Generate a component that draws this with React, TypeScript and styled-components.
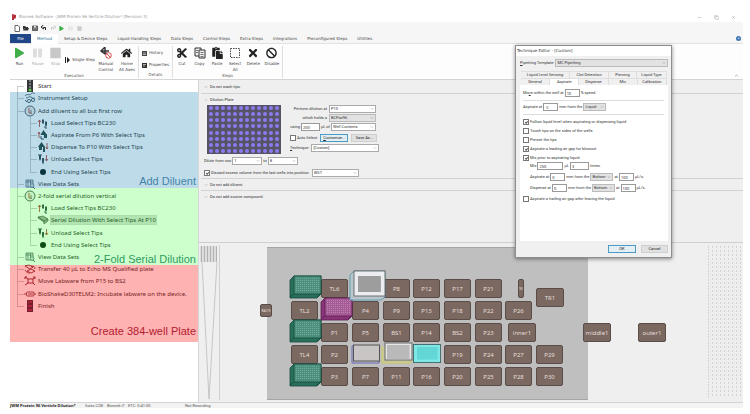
import React from "react";
import styled, { createGlobalStyle, css } from "styled-components";
import { FaPlay, FaPause, FaStop, FaCut, FaHome, FaTimes, FaBan, FaPaste } from "react-icons/fa";
import { ChevronDown, ChevronUp, Minus, Copy, X } from "lucide-react";

const Global = createGlobalStyle`
  *, *::before, *::after { box-sizing: border-box; }
  body { margin: 0; background: #fff; }
  button, input, select { font: inherit; color: inherit; margin: 0; }
  button { padding: 0; border: 0; background: none; }
`;

const chromeFont = `4px/6px "DejaVu Sans", "Open Sans", sans-serif`;

const Page = styled.div`
  min-height: 100vh;
  padding: 12px 7px 6px 10px;
  display: flex;
  flex-direction: column;
  position: relative;
  overflow: hidden;
  font: 4px/6px Roboto, "Noto Sans", sans-serif;
  color: #444;
`;

/* ---------- window chrome ---------- */

const TitleBar = styled.header`
  height: 10px;
  display: flex;
  align-items: center;
  gap: 3px;
  padding: 0 7px 0 2px;
  color: #999;
  font: ${chromeFont};
`;
const TitleText = styled.h1`
  flex: 1;
  margin: 0;
  font-size: inherit;
  font-weight: 400;
`;
const WindowButtons = styled.div`
  display: flex;
  gap: 12px;
  button { display: flex; }
`;
const QuickBar = styled.div`
  height: 12px;
  background: #f6f6f6;
  display: flex;
  align-items: center;
  gap: 3px;
  padding-left: 4px;
  button { display: flex; min-width: 6px; }
`;
const TabBar = styled.nav`
  height: 10px;
  background: #f6f6f6;
  display: flex;
  align-items: stretch;
  border-bottom: 1px solid #e2e2e2;
  padding-right: 2px;
  font: ${chromeFont};
`;
const RibbonTab = styled.button<{ $kind?: "file" | "active" }>`
  padding: 0 5px;
  white-space: nowrap;
  ${(p) => p.$kind === "file" && css`background: #1f4788; color: #fff; width: 21px;`}
  ${(p) => p.$kind === "active" && css`background: #fff; color: #2b7394; width: 27px; margin-right: 1px; height: 10px;`}
`;
const HelpButton = styled.button`
  margin-left: auto;
  display: flex;
  align-items: center;
`;
const Ribbon = styled.div`
  height: 36px;
  display: flex;
  background: #fdfdfd;
  border-bottom: 1px solid #d4d4d4;
  padding: 2px 0 1px;
  font: ${chromeFont};
`;
const RibbonGroup = styled.section<{ $w: number }>`
  width: ${(p) => p.$w}px;
  border-right: 1px solid #dedede;
  display: flex;
  flex-direction: column;
`;
const GroupTools = styled.div`
  flex: 1;
  display: flex;
  justify-content: space-evenly;
`;
const GroupName = styled.div`
  text-align: center;
  height: 6px;
  color: #555;
`;
const Tool = styled.button<{ $dim?: boolean; $w?: number }>`
  width: ${(p) => p.$w ?? 17}px;
  display: flex;
  flex-direction: column;
  align-items: center;
  line-height: 6px;
  white-space: nowrap;
  color: ${(p) => (p.$dim ? "#aaa" : "#444")};
  svg { height: 12px; margin: 1px 0 2px; }
`;
const SmallTools = styled.div`
  display: flex;
  flex-direction: column;
  justify-content: center;
  gap: 6px;
`;
const SmallTool = styled.button`
  display: flex;
  align-items: center;
  gap: 2px;
  white-space: nowrap;
`;
const RibbonEnd = styled.button`
  margin: auto 4px 0 auto;
  display: flex;
`;

/* ---------- body ---------- */

const Body = styled.main`
  flex: 1;
  display: flex;
  background: #efefef;
`;
const Sidebar = styled.aside`
  width: 189px;
  position: relative;
  background: #fff;
  border-right: 1px solid #d6d6d6;
  font: 6px/8px "Noto Sans", sans-serif;
  color: #333;
`;
const StepList = styled.ul`
  list-style: none;
  margin: 0;
  padding: 0 0 0 6px;
  height: 232px;
  display: grid;
  grid-auto-rows: 1fr;
`;
const StepRow = styled.li`
  display: flex;
  align-items: center;
  min-height: 0;
`;
type Span = "full" | "lower" | "upper" | "line";
const Guide = styled.span<{ $span: Span; $indent?: boolean }>`
  align-self: stretch;
  width: 8px;
  margin-right: ${(p) => (p.$indent ? 5 : 0)}px;
  position: relative;
  &::before {
    content: "";
    position: absolute;
    left: 1px;
    top: ${(p) => (p.$span === "lower" ? "50%" : "0")};
    bottom: ${(p) => (p.$span === "upper" ? "50%" : "0")};
    border-left: 1px solid #ccc;
  }
  &::after {
    content: "";
    position: absolute;
    left: 1px;
    right: 0;
    top: 50%;
    border-top: ${(p) => (p.$span === "line" ? "0" : "1px")} solid #ccc;
  }
`;
const StepIcon = styled.span`
  width: 12px;
  height: 12px;
  margin-right: 2px;
  svg { display: block; }
`;
const StepName = styled.span<{ $selected?: boolean }>`
  white-space: nowrap;
  ${(p) => p.$selected && css`background: #dedede; outline: 1px solid #d6d6d6;`}
`;
const Band = styled.div<{ $top: number; $h: number; $tint: string; $ink: string; $lift?: number }>`
  position: absolute;
  left: 0;
  right: 0;
  top: ${(p) => p.$top}px;
  height: ${(p) => p.$h}px;
  background: ${(p) => p.$tint};
  color: ${(p) => p.$ink};
  display: flex;
  align-items: flex-end;
  justify-content: flex-end;
  padding: 0 2px ${(p) => p.$lift ?? 0}px 0;
  font: 11px/12px "Liberation Sans", sans-serif;
`;

const Work = styled.div`
  flex: 1;
  min-width: 0;
  display: flex;
  flex-direction: column;
`;
const Config = styled.div`
  height: 163px;
  border-bottom: 1px solid #cfcfcf;
  padding-left: 2px;
`;
const Fold = styled.section<{ $open?: boolean }>`
  border-top: 1px solid #d2d2d2;
  padding-left: 3px;
  height: ${(p) => (p.$open ? "auto" : "12px")};
  &:first-child { border-top-color: #efefef; height: 13px; }
`;
const FoldHead = styled.h2`
  margin: 0;
  padding-top: 2px;
  display: flex;
  align-items: center;
  gap: 2px;
  font-size: 4px;
  font-weight: 400;
  line-height: 8px;
  color: #333;
`;
const Dilution = styled.div`
  display: flex;
  gap: 8px;
  padding: 1px 0 0 3px;
`;
const Plate = styled.div`
  width: 74px;
  height: 49px;
  background: #565366;
  display: grid;
  grid-template-columns: repeat(12, 1fr);
  grid-template-rows: repeat(8, 1fr);
  place-items: center;
  padding: 0 1px;
`;
const Well = styled.i`
  width: 4px;
  height: 4px;
  border-radius: 50%;
  background: #8a7cf0;
`;
const FormCol = styled.div`
  width: 90px;
  display: flex;
  flex-direction: column;
  gap: 1px;
`;
const Line = styled.div<{ $gap?: number; $end?: boolean; $pad?: number; $top?: number; $h?: number }>`
  display: flex;
  align-items: center;
  height: ${(p) => p.$h ?? 8}px;
  gap: ${(p) => p.$gap ?? 2}px;
  justify-content: ${(p) => (p.$end ? "flex-end" : "flex-start")};
  padding: 0 ${(p) => (p.$end ? 3 : 0)}px 0 ${(p) => p.$pad ?? 0}px;
  margin-top: ${(p) => p.$top ?? 0}px;
  white-space: nowrap;
  color: #333;
`;
const Field = styled.input<{ $w: number }>`
  width: ${(p) => p.$w}px;
  height: 8px;
  border: 1px solid #999;
  background: #fff;
  padding: 0 1px;
  line-height: 6px;
  border-radius: 0;
`;
const SelectWrap = styled.span<{ $w?: number; $gray?: boolean }>`
  display: grid;
  grid-template-columns: minmax(0, 1fr);
  align-items: center;
  ${(p) => (p.$w ? css`width: ${p.$w}px;` : css`flex: 1;`)}
  height: 8px;
  border: 1px solid ${(p) => (p.$gray ? "#bbb" : "#aaa")};
  background: ${(p) => (p.$gray ? "#e2e2e2" : "#fff")};
  select {
    grid-area: 1 / 1;
    appearance: none;
    border: 0;
    background: none;
    padding: 0 1px;
    height: 6px;
    line-height: 6px;
  }
  svg { grid-area: 1 / 1; justify-self: end; margin-right: 1px; pointer-events: none; }
`;
const Check = styled.label`
  display: flex;
  align-items: center;
  gap: 1px;
  white-space: nowrap;
`;
const CheckInput = styled.input.attrs({ type: "checkbox" })`
  appearance: none;
  width: 6px;
  height: 6px;
  border: 1px solid #777;
  background: #fff;
  display: grid;
  place-items: center;
  &:checked::after {
    content: "";
    width: 3px;
    height: 2px;
    border: solid #555;
    border-width: 0 0 1px 1px;
    transform: rotate(-45deg);
  }
`;
const Push = styled.button<{ $w: number; $focus?: boolean }>`
  width: ${(p) => p.$w}px;
  height: 8px;
  line-height: 6px;
  background: ${(p) => (p.$focus ? "#e3eef5" : "#e1e1e1")};
  border: 1px solid ${(p) => (p.$focus ? "#4a9cc4" : "#cfcfcf")};
  color: #222;
`;

/* ---------- deck ---------- */

const DeckPane = styled.div`
  flex: 1;
  display: flex;
  justify-content: space-between;
  position: relative;
`;
const Surface = styled.div`
  position: absolute;
  left: 68px;
  top: 4px;
  width: 321px;
  height: 153px;
  background: #bfbfbf;
  border: solid #a5a5a5;
  border-width: 1px 0;
`;
const Slot = styled.div<{ $x: number; $y: number; $w?: number; $h?: number; $small?: boolean }>`
  position: absolute;
  left: ${(p) => p.$x}px;
  top: ${(p) => p.$y}px;
  width: ${(p) => p.$w ?? 28}px;
  height: ${(p) => p.$h ?? 19}px;
  background: #7b6860;
  border: 1px solid #5a4d49;
  border-radius: 2px;
  color: #e4dedb;
  display: flex;
  align-items: center;
  justify-content: center;
  overflow: hidden;
  font: ${(p) => (p.$small ? 3 : 6)}px/8px "Noto Sans", sans-serif;
`;
const Labware = styled.svg<{ $x: number; $y: number }>`
  position: absolute;
  left: ${(p) => p.$x}px;
  top: ${(p) => p.$y}px;
  overflow: visible;
`;

/* ---------- dialog ---------- */

const Dialog = styled.div`
  position: absolute;
  top: 45px;
  right: 78px;
  width: 157px;
  background: #f0f0f0;
  border: 1px solid #8d8d8d;
  box-shadow: 0 1px 4px rgba(0, 0, 0, 0.45);
  color: #333;
`;
const DialogTitle = styled.h2`
  margin: 0;
  height: 10px;
  background: #fff;
  padding: 2px 0 0 1px;
  font: ${chromeFont};
`;
const DialogBody = styled.div`
  padding: 2px 3px 4px 4px;
`;
const TabLine = styled.div<{ $cols: string; $top?: number }>`
  display: grid;
  grid-template-columns: ${(p) => p.$cols};
  height: 7px;
  margin: ${(p) => p.$top ?? 0}px 1px 0;
`;
const DialogTab = styled.button<{ $on?: boolean }>`
  border: 1px solid #dedede;
  border-bottom: 0;
  border-left: 0;
  background: ${(p) => (p.$on ? "#fff" : "#f0f0f0")};
  line-height: 6px;
  white-space: nowrap;
`;
const TabPanel = styled.div`
  background: #fff;
  padding: 4px 4px 0 3px;
  height: 156px;
  display: flex;
  flex-direction: column;
`;
const Rule = styled.hr`
  width: 100%;
  margin: 3px 0 2px;
  border: 0;
  border-top: 1px solid #dcdcdc;
`;
const Buttons = styled.div`
  display: flex;
  justify-content: flex-end;
  gap: 5px;
  padding-top: 4px;
`;

const StatusBar = styled.footer`
  height: 6px;
  background: #f3f3f3;
  border-top: 1px solid #d4d4d4;
  display: flex;
  line-height: 5px;
  white-space: nowrap;
`;
const StatusCell = styled.span<{ $w: number; $bold?: boolean }>`
  width: ${(p) => p.$w}px;
  ${(p) => (p.$bold ? css`font: bold 4px/5px "Noto Sans", sans-serif; color: #222;` : css`color: #555;`)}
`;

/* ---------- pieces ---------- */

function Select({ label, value, w, gray, id }: { label?: string; value: string; w?: number; gray?: boolean; id?: string }) {
  return (
    <SelectWrap $w={w} $gray={gray}>
      <select aria-label={label} id={id} defaultValue={value}>
        <option>{value}</option>
      </select>
      <ChevronDown size={4} color="#666" />
    </SelectWrap>
  );
}

type IconKind = "start" | "setup" | "group" | "load" | "aspirate" | "dispense" | "unload" | "end" | "view" | "serial" | "transfer" | "move" | "shake" | "finish";

const tip = "M5 3h2v3l-1 1-1-1zM8 5h2v3l-1 2-1-2z";

function StepGlyph({ kind }: { kind: IconKind }) {
  const body: Record<IconKind, React.ReactNode> = {
    start: (<><rect x="3" y="0" width="6" height="12" fill="#33363a" /><path d="M5 1h2M5 4h2M5 7h2" stroke="#bbb" strokeWidth="1" /><circle cx="6" cy="10" r="1.6" fill="#5fc447" /></>),
    finish: (<><rect x="3" y="0" width="6" height="12" fill="#3c2b46" /><path d="M4 2h4M4 6h4M4 10h4" stroke="#a33a52" strokeWidth="1.4" /></>),
    setup: (<g fill="none" stroke="#4a5a64" strokeWidth=".9"><path d="M1 4c2-3 4 0 6-2s3-1 4 0M2 6c2 0 3-2 5-1s2 2 4 1" /><circle cx="5" cy="9" r="1.6" /><circle cx="9" cy="8" r="1.6" /><path d="M1 8l2 2" /></g>),
    group: (<><circle cx="6" cy="6" r="5" fill="#f1eeee" stroke="#59606a" strokeWidth="1" /><path d="M5 3v5h2" fill="none" stroke="#c0504a" strokeWidth="1" /><path d="M7 5v3l1 1" fill="none" stroke="#6b5a5a" strokeWidth=".8" /></>),
    load: (<><path d="M2.500 10V3M1 5l1.500-2L4 5" fill="none" stroke="#b5473f" strokeWidth=".9" /><path d={tip} fill="#3a4a50" /><path d="M5 3h2M8 5h2M8 9v2h2" fill="none" stroke="#3a4a50" /></>),
    aspirate: (<><path d="M2 9V3M1 5l1-2 1 2" fill="none" stroke="#b5473f" strokeWidth=".9" /><path d="M6.500 1L10 6H3.500z" fill="#26463c" /><path d="M7 5h3v4H7z" fill="#2c4e46" /><path d="M4 7v3h3" stroke="#3a4a50" fill="none" /></>),
    dispense: (<><path d="M4.500 1L8 6H1z" fill="#26463c" /><path d="M2 6h3v3H2zM6 6h2v5H6z" fill="#2c4e46" /><path d="M10 2v6M9 6l1 2 1-2" fill="none" stroke="#b5473f" strokeWidth=".9" /></>),
    unload: (<><path d="M2 2h2v4L3 8 2 6zM5 5h2v4l-1 1-1-1z" fill="#3a4a50" /><path d="M1 2h4M5 10h2" stroke="#3a4a50" /><path d="M9.500 2v6M8 6l1.500 2L11 6" fill="none" stroke="#b5473f" strokeWidth=".9" /></>),
    end: <circle cx="6" cy="6" r="3" fill="#10201c" />,
    view: (<><path d="M2 2h7v7H2zM2 4h7M4 2v7M6.500 2v7" fill="none" stroke="#56646c" strokeWidth=".8" /><circle cx="8" cy="7.500" r="1.800" fill="#dfe6ea" stroke="#56646c" strokeWidth=".7" /><path d="M9 9l2 2" stroke="#56646c" /></>),
    serial: (<g fill="#a7aea4" stroke="#4f5750" strokeWidth=".7"><path d="M1 3l5-1 5 3-4 2z" /><path d="M7 7l4-2v2L7 10z" /><path d="M1 3l6 4v1L1 4z" /></g>),
    transfer: (<g fill="none" stroke="#7b2f38" strokeWidth=".9"><path d="M1 3l4-1 4 2-3 2zM3 8l4-2 4 2-4 2zM1 7c2 3 3 3 5 3M7 3c3 0 4 1 4 3" /></g>),
    move: (<g fill="none" stroke="#7b1f2c" strokeWidth=".9"><rect x="4" y="4" width="5" height="4" /><path d="M1 2l3 2M11 2L9 4M1 10l3-2M11 10L9 8M1 4V2h2M11 4V2H9" /></g>),
    shake: (<g fill="none" stroke="#7b3a44" strokeWidth=".9"><rect x="2.500" y="4" width="7.500" height="4" rx="1" /><path d="M4 6h5M1 5v2M11 5v2" /></g>),
  };
  return <svg width="12" height="12" viewBox="0 0 12 12" aria-hidden="true">{body[kind]}</svg>;
}

type Step = { name: string; icon: IconKind; child?: boolean; last?: boolean; selected?: boolean };
const steps: Step[] = [
  { name: "Start", icon: "start" },
  { name: "Instrument Setup", icon: "setup" },
  { name: "Add diluent to all but first row", icon: "group" },
  { name: "Load Select Tips BC230", icon: "load", child: true },
  { name: "Aspirate From P6 With Select Tips", icon: "aspirate", child: true },
  { name: "Dispense To P10 With Select Tips", icon: "dispense", child: true },
  { name: "Unload Select Tips", icon: "unload", child: true },
  { name: "End Using Select Tips", icon: "end", child: true, last: true },
  { name: "View Data Sets", icon: "view" },
  { name: "2-fold serial dilution vertical", icon: "group" },
  { name: "Load Select Tips BC230", icon: "load", child: true },
  { name: "Serial Dilution With Select Tips At P10", icon: "serial", child: true, selected: true },
  { name: "Unload Select Tips", icon: "unload", child: true },
  { name: "End Using Select Tips", icon: "end", child: true, last: true },
  { name: "View Data Sets", icon: "view" },
  { name: "Transfer 40 µL to Echo MS Qualified plate", icon: "transfer" },
  { name: "Move Labware from P15 to BS2", icon: "move" },
  { name: "BioShakeD30TELM2: Incubate labware on the device.", icon: "shake" },
  { name: "Finish", icon: "finish" },
];

const colX = [92, 122, 153, 184, 214, 245, 276, 306, 337];
const rowY = [36, 58, 80, 102, 124];
const slotRows: (string | null)[][] = [
  [null, "TL6", null, "P8", "P12", "P17", "P21"],
  ["TL2", null, "P4", "P9", "P13", "P18", "P22", "P26"],
  [null, "P1", "P5", "BS1", "P14", "BS2", "P23"],
  ["TL4", "P2", null, null, null, "P19", "P24", "P27", "P29"],
  [null, "P3", "P7", "P11", "P16", "P20", "P25", "P28", "P30"],
];

function Box({ x, y, face, side, edge }: { x: number; y: number; face: string; side: string; edge: string }) {
  return (
    <Labware $x={x} $y={y} width="32" height="23" viewBox="0 0 32 23" aria-hidden="true">
      <path d="M0 5L4 1h27v18l-4 4H0z" fill={side} stroke={edge} strokeWidth=".8" />
      <rect x="4" y="1" width="27" height="18" fill={face} stroke={edge} strokeWidth=".8" />
      <path d="M0 22l4-3M27 22l4-3" stroke={edge} strokeWidth=".8" />
      <g stroke="#fff" strokeOpacity=".25" strokeDasharray="1 1">
        {[3.5, 5.5, 7.5, 9.5, 11.5, 13.5, 15.5].map((r) => <path key={r} d={`M6 ${r}h24`} />)}
      </g>
    </Labware>
  );
}

function Grid({ x, y, w, h, c }: { x: number; y: number; w: number; h: number; c: string }) {
  const lines = [];
  for (let i = 1; i < w; i += 2) lines.push(`M${x + i} ${y}v${h}`);
  for (let i = 1; i < h; i += 2) lines.push(`M${x} ${y + i}h${w}`);
  return <path d={lines.join("")} stroke={c} strokeWidth=".7" />;
}

function Deck() {
  return (
    <DeckPane>
      <svg width="21" height="158" viewBox="0 0 21 158" aria-hidden="true">
        <rect x="1" y="3" width="17" height="16" fill="#ddd" />
        <path d="M2.500 3v16M5.500 3v16M8.500 3v16M11.500 3v16M14.500 3v16M17.500 3v16" stroke="#b2b2b2" />
        <path d="M3 19L10 156L18 19" fill="none" stroke="#bbb" strokeWidth=".8" />
        <path d="M20.500 2v155" stroke="#cfcfcf" />
      </svg>
      <Surface />
      <Slot $x={61} $y={61} $w={12} $h={13} $small>WASTE</Slot>
      {slotRows.map((row, r) =>
        row.map((name, c) => name && <Slot key={name} $x={colX[c]} $y={rowY[r]} $w={27}>{name}</Slot>)
      )}
      <Slot $x={319} $y={36} $w={6} $small>TR2</Slot>
      <Slot $x={337} $y={45}>TR1</Slot>
      <Slot $x={309} $y={80}>inner1</Slot>
      <Slot $x={384} $y={80}>middle1</Slot>
      <Slot $x={439} $y={80}>outer1</Slot>
      {[32, 76, 120].map((y) => <Box key={y} x={91} y={y} face="#4a8f7c" side="#28705c" edge="#174a3c" />)}
      <Box x={122} y={54} face="#a55a95" side="#8a3478" edge="#5c1c50" />
      <Labware $x={150} $y={27} width="37" height="31" viewBox="0 0 37 31" aria-hidden="true">
        <path d="M1 5L5 1h31v26l-4 3H1z" fill="#b9c6cb" stroke="#4c98ac" strokeWidth=".8" />
        <rect x="5" y="1" width="31" height="25" fill="#ebedf0" stroke="#555" strokeWidth=".8" />
        <rect x="9" y="6" width="23" height="16" fill="#b4b4b4" />
        <Grid x={9} y={6} w={23} h={16} c="#8c8c8c" />
      </Labware>
      <Labware $x={153} $y={101} width="28" height="20" viewBox="0 0 28 20" aria-hidden="true">
        <path d="M0 2h27v17H0z" fill="#bcbcbc" stroke="#6a68b8" />
        <rect x="1.500" y="1" width="26" height="16" fill="#c9c5c5" stroke="#555" />
      </Labware>
      <Labware $x={183} $y={99} width="31" height="22" viewBox="0 0 31 22" aria-hidden="true">
        <path d="M0 4v17h28l2-3" fill="#c8c8a0" stroke="#cfcb5a" />
        <rect x="3" y="1" width="27" height="17" fill="#e6e6e6" stroke="#666" />
        <Grid x={5} y={3} w={23} h={14} c="#999" />
      </Labware>
      <Labware $x={214} $y={101} width="28" height="20" viewBox="0 0 28 20" aria-hidden="true">
        <rect x=".500" y=".500" width="27" height="18" fill="#7fe8e6" stroke="#45706f" />
        <Grid x={4} y={3} w={21} h={13} c="#4fcaca" />
      </Labware>
      <svg width="35" height="158" viewBox="0 0 35 158" aria-hidden="true">
        <path d="M.5 3v152" stroke="#d4d4d4" strokeDasharray="2 1" />
        {[4, 8, 12, 16, 20, 24, 28, 32].map((x) => (
          <React.Fragment key={x}>
            <path d={`M${x + 0.5} 3v152`} stroke="#d2d2d2" strokeDasharray="2 2" />
            <path d={`M${x - 1.5} 18v118`} stroke="#e2e2e2" strokeDasharray="1 1" />
          </React.Fragment>
        ))}
      </svg>
    </DeckPane>
  );
}

const Caret = ({ up }: { up?: boolean }) => (up ? <ChevronUp size={4} color="#777" /> : <ChevronDown size={4} color="#777" />);

function DilutionForm() {
  return (
    <Dilution>
      <Plate aria-label="Dilution plate">
        {Array.from({ length: 96 }, (_, i) => <Well key={i} />)}
      </Plate>
      <FormCol>
        <Line $end><label htmlFor="pos">Perform dilution at</label><Select id="pos" value="P10" w={47} /></Line>
        <Line $end><label htmlFor="holds">which holds a</label><Select id="holds" value="BCFlat96" w={47} gray /></Line>
        <Line $end $gap={1}>
          <label htmlFor="vol">using</label><Field id="vol" $w={19} defaultValue="200" />
          <label htmlFor="liq">µL of</label><Select id="liq" value="Well Contents" w={45} />
        </Line>
        <Line $top={2} $pad={1} $gap={3}>
          <Check><CheckInput />Auto Select</Check>
          <Push $w={28} $focus><u>C</u>ustomize...</Push>
          <Push $w={26}>Save As...</Push>
        </Line>
        <Line $pad={1} $top={1}><label htmlFor="tech"><u>T</u>echnique:</label><Select id="tech" value="[Custom]" /></Line>
      </FormCol>
    </Dilution>
  );
}

function TechniqueEditor() {
  return (
    <Dialog role="dialog" aria-label="Technique Editor">
      <DialogTitle>Technique Editor - [Custom]</DialogTitle>
      <DialogBody>
        <Line $gap={1} $h={9}><label htmlFor="tmpl"><u>P</u>ipetting Template:</label><Select id="tmpl" value="MC Pipetting" gray /></Line>
        <TabLine $cols="49fr 39fr 28fr 30fr" $top={4}>
          {["Liquid Level Sensing", "Clot Detection", "Piercing", "Liquid Type"].map((t) => <DialogTab key={t}>{t}</DialogTab>)}
        </TabLine>
        <TabLine $cols="repeat(5, 1fr)">
          {["General", "Aspirate", "Dispense", "Mix", "Calibration"].map((t) => <DialogTab key={t} $on={t === "Aspirate"}>{t}</DialogTab>)}
        </TabLine>
        <TabPanel>
          <Line $gap={1}><label htmlFor="spd">Mo<u>v</u>e within the well at</label><Field id="spd" $w={15} defaultValue="10" />% speed.</Line>
          <Rule />
          <Line $gap={1}><label htmlFor="asp">Aspirate at</label><Field id="asp" $w={15} defaultValue="-2" />mm from the<Select label="Reference" value="Liquid" w={23} gray /></Line>
          <Rule />
          <Line $h={9}><Check><CheckInput defaultChecked />Follow liquid level when aspirating or dispensing liquid</Check></Line>
          <Line $h={9}><Check><CheckInput />Touch tips on the sides of the wells</Check></Line>
          <Line $h={9}><Check><CheckInput />Prewet the tips</Check></Line>
          <Line $h={9}><Check><CheckInput defaultChecked />Aspirate a leading air gap for blowout</Check></Line>
          <Line $h={9}><Check><CheckInput defaultChecked />Mix prior to aspirating liquid</Check></Line>
          <Line $pad={7} $gap={1}><label htmlFor="mix">Mix</label><Field id="mix" $w={26} defaultValue="250" />µL<Field aria-label="Times" $w={19} defaultValue="3" />times.</Line>
          <Line $pad={7} $gap={1} $top={3}><label htmlFor="ma">Aspirate at</label><Field id="ma" $w={15} defaultValue="0" />mm from the<Select label="Aspirate reference" value="Bottom" w={23} gray />at<Field aria-label="Aspirate speed" $w={15} defaultValue="100" />µL/s.</Line>
          <Line $pad={7} $gap={1} $top={3}><label htmlFor="md">Dispense at</label><Field id="md" $w={15} defaultValue="0" />mm from the<Select label="Dispense reference" value="Bottom" w={23} gray />at<Field aria-label="Dispense speed" $w={15} defaultValue="100" />µL/s.</Line>
          <Line $h={9} $top={2}><Check><CheckInput />Aspirate a trailing air gap after leaving the liquid</Check></Line>
        </TabPanel>
        <Buttons><Push $w={28} $focus>OK</Push><Push $w={27}>Cancel</Push></Buttons>
      </DialogBody>
    </Dialog>
  );
}

export default function App() {
  return (
    <>
      <Global />
      <Page>
        <TitleBar>
          <svg width="4" height="6" viewBox="0 0 4 6" aria-hidden="true"><path d="M0 0l4 1v3L2 5v1H0z" fill="#b8323c" /></svg>
          <TitleText>Biomek Software - JWM Protein 96 Verticle Dilution* [Revision 3]</TitleText>
          <WindowButtons>
            <button aria-label="Minimize"><Minus size={5} /></button>
            <button aria-label="Restore"><Copy size={5} /></button>
            <button aria-label="Close"><X size={5} /></button>
          </WindowButtons>
        </TitleBar>
        <QuickBar>
          <button aria-label="New"><svg width="6" height="7" viewBox="0 0 6 7"><path d="M1 .5h3l1.500 1.500v4.500H1z" fill="#fff" stroke="#444" strokeWidth=".8" /></svg></button>
          <button aria-label="Open"><svg width="6" height="6" viewBox="0 0 6 6"><path d="M0 1h2l1 1h2v1H2L0 5z" fill="#333" /><path d="M2 3h4L5 5.500H0z" fill="#333" /></svg></button>
          <button aria-label="Save"><svg width="6" height="6" viewBox="0 0 6 6"><path d="M.5 1h5v4.500h-5z" fill="#777" stroke="#444" strokeWidth=".8" /><path d="M2 1v1.500h2V1" fill="#ddd" /></svg></button>
          <button aria-label="Undo"><svg width="6" height="6" viewBox="0 0 6 6"><path d="M2.500 0L0 2l2.500 2V2.500h2V5" fill="none" stroke="#222" strokeWidth="1" /></svg></button>
          <button aria-label="Redo"><svg width="6" height="6" viewBox="0 0 6 6"><path d="M3.500 0L6 2 3.500 4V2.500h-2V5" fill="none" stroke="#ccc" strokeWidth="1" /></svg></button>
          <button aria-label="Run"><FaPlay size={5} color="#3fae49" /></button>
          <button aria-label="Pause"><FaPause size={5} color="#e4e4e4" /></button>
          <button aria-label="Stop"><FaStop size={5} color="#ccc" /></button>
        </QuickBar>
        <TabBar>
          <RibbonTab $kind="file">File</RibbonTab>
          <RibbonTab $kind="active">Method</RibbonTab>
          {["Setup & Device Steps", "Liquid Handling Steps", "Data Steps", "Control Steps", "Extra Steps", "Integrations", "Preconfigured Steps", "Utilities"].map((t) => (
            <RibbonTab key={t}>{t}</RibbonTab>
          ))}
          <HelpButton aria-label="Help"><svg width="5" height="5" viewBox="0 0 5 5"><circle cx="2.500" cy="2.500" r="2.500" fill="#3f78b5" /><path d="M2 2h1v1" stroke="#fff" strokeWidth=".7" fill="none" /></svg></HelpButton>
        </TabBar>
        <Ribbon>
          <RibbonGroup $w={129}>
            <GroupTools>
              <Tool><FaPlay size={9} color="#3fae49" />Run</Tool>
              <Tool $dim><FaPause size={9} color="#ddd" />Pause</Tool>
              <Tool $dim><FaStop size={11} color="#c8c8c8" />Stop</Tool>
              <SmallTools>
                <SmallTool><svg width="5" height="6" viewBox="0 0 5 6"><path d="M0 0h1v6H0zM2 0l3 3-3 3z" fill="#222" /></svg>Single Step</SmallTool>
              </SmallTools>
              <Tool $w={20}><svg width="12" height="12" viewBox="0 0 12 12"><path d="M5 0L1 4l4 3 2-1M5 0v7M1 4h8" stroke="#333" strokeWidth="1.400" fill="none" /><circle cx="8.500" cy="8.500" r="2.800" fill="#fff" stroke="#cf4646" /><path d="M6.500 6.500l4 4" stroke="#cf4646" /></svg>Manual<br />Control</Tool>
              <Tool $w={20}><FaHome size={11} color="#222" />Home<br />All Axes</Tool>
            </GroupTools>
            <GroupName>Execution</GroupName>
          </RibbonGroup>
          <RibbonGroup $w={34}>
            <GroupTools>
              <SmallTools>
                <SmallTool><svg width="5" height="5" viewBox="0 0 5 5"><path d="M0 0h5v5H0z" fill="#444" /><path d="M1 2h3M1 3.500h3" stroke="#ddd" strokeWidth=".7" /></svg>History</SmallTool>
                <SmallTool><svg width="5" height="5" viewBox="0 0 5 5"><path d="M0 0h5v5H0z" fill="#333" /><path d="M1 1.500h3M1 3h2" stroke="#ddd" strokeWidth=".7" /></svg>Properties</SmallTool>
              </SmallTools>
            </GroupTools>
            <GroupName>Details</GroupName>
          </RibbonGroup>
          <RibbonGroup $w={110}>
            <GroupTools>
              <Tool><FaCut size={10} color="#222" />Cut</Tool>
              <Tool><svg width="12" height="12" viewBox="0 0 12 12"><path d="M1 1h6v8H1z" fill="#eee" stroke="#333" /><path d="M5 3h6v8H5z" fill="#eee" stroke="#333" /><path d="M6.500 5.500h3M6.500 7.500h3M6.500 9.500h3M2 3.500h2M2 5.500h2" stroke="#555" strokeWidth=".8" /></svg>Copy</Tool>
              <Tool><FaPaste size={11} color="#222" />Paste</Tool>
              <Tool $w={18}><svg width="12" height="12" viewBox="0 0 12 12"><rect x="1.500" y="1.500" width="9" height="9" fill="none" stroke="#444" strokeDasharray="1.500 1" /></svg>Select<br />All</Tool>
              <Tool><FaTimes size={12} color="#222" />Delete</Tool>
              <Tool $w={19}><FaBan size={11} color="#222" />Disable</Tool>
            </GroupTools>
            <GroupName>Steps</GroupName>
          </RibbonGroup>
          <RibbonEnd aria-label="Collapse ribbon"><ChevronUp size={5} color="#555" /></RibbonEnd>
        </Ribbon>
        <Body>
          <Sidebar>
            <StepList>
              {steps.map((s, i) => (
                <StepRow key={i}>
                  <Guide $span={s.child ? "line" : i === 0 ? "lower" : i === steps.length - 1 ? "upper" : "full"} $indent={s.child} />
                  {s.child && <Guide $span={s.last ? "upper" : "full"} />}
                  <StepIcon><StepGlyph kind={s.icon} /></StepIcon>
                  <StepName $selected={s.selected}>{s.name}</StepName>
                </StepRow>
              ))}
            </StepList>
            <Band $top={12} $h={96} $tint="rgba(0,114,168,.26)" $ink="#4585a8" $lift={1}>Add Diluent</Band>
            <Band $top={108} $h={77} $tint="rgba(0,255,0,.2)" $ink="#2c9c62">2-Fold Serial Dilution</Band>
            <Band $top={185} $h={77} $tint="rgba(255,0,0,.3)" $ink="#b3202e" $lift={5}>Create 384-well Plate</Band>
          </Sidebar>
          <Work>
            <Config>
              <Fold><FoldHead><Caret />Do not wash tips.</FoldHead></Fold>
              <Fold $open>
                <FoldHead><Caret up />Dilution Plate</FoldHead>
                <DilutionForm />
                <Line $top={3} $gap={1}>
                  <label htmlFor="r1">Dilute from row</label><Select id="r1" value="1" w={30} />
                  <label htmlFor="r2">to</label><Select id="r2" value="8" w={30} />
                </Line>
                <Line $top={2} $gap={3} $h={11}>
                  <Check><CheckInput defaultChecked />Discard excess volume from the last wells into position</Check>
                  <Select label="Discard position" value="WST" w={47} />
                </Line>
              </Fold>
              <Fold><FoldHead><Caret />Do not add diluent.</FoldHead></Fold>
              <Fold><FoldHead><Caret />Do not add source compound.</FoldHead></Fold>
            </Config>
            <Deck />
          </Work>
        </Body>
        <StatusBar>
          <StatusCell $w={75} $bold>JWM Protein 96 Verticle Dilution*</StatusCell>
          <StatusCell $w={22}>Sciex COE</StatusCell>
          <StatusCell $w={21}>Biomek i7</StatusCell>
          <StatusCell $w={57}>ETC: 0:41:00</StatusCell>
          <StatusCell $w={30}>Not Recording</StatusCell>
        </StatusBar>
        <TechniqueEditor />
      </Page>
    </>
  );
}
